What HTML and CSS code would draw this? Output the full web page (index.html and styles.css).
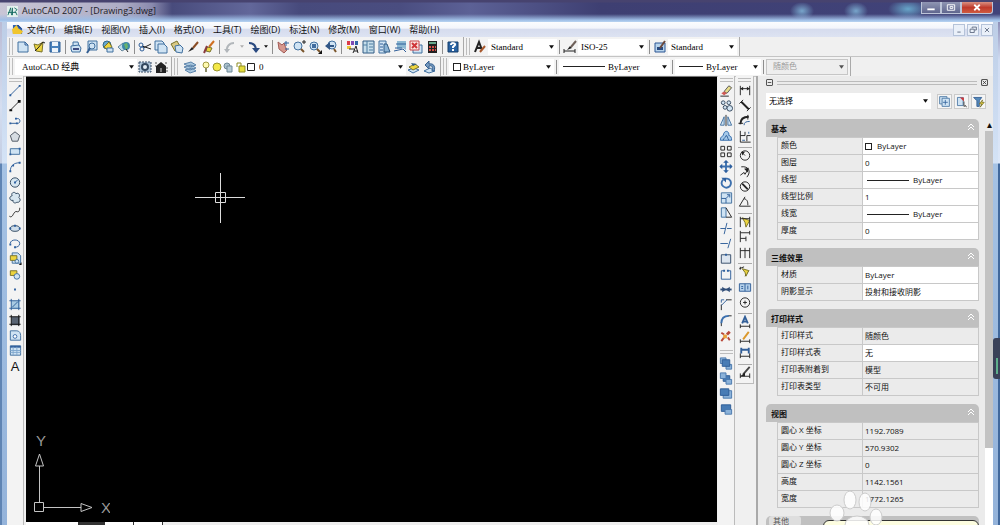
FILE: index.html
```html
<!DOCTYPE html>
<html lang="zh-CN">
<head>
    <meta charset="UTF-8">
    <meta name="viewport" content="width=device-width, initial-scale=1.0">
    <title>AutoCAD 2007 - [Drawing3.dwg]</title>
    <link rel="stylesheet" href="styles.css">
</head>
<body>
    <header class="titlebar">
        <svg class="app-icon" viewBox="0 0 12 12"><rect width="12" height="12" fill="#e4f1ee"/><path d="M1 10L4 2l1 8M6 2v8M8 2l3 2-2 2 2 4M1 7h9" stroke="#176b62"/></svg>
        <h1>AutoCAD 2007 - [Drawing3.dwg]</h1>
        <div class="window-buttons">
            <button aria-label="最小化"><svg viewBox="0 0 16 12"><path d="M4 8h8" stroke="#fff" stroke-width="2"/></svg></button>
            <button aria-label="最大化"><svg viewBox="0 0 16 12"><path d="M4 3h8v6H4zM7 5h3v2H7z" stroke="#fff"/></svg></button>
            <button class="close" aria-label="关闭"><svg viewBox="0 0 16 12"><path d="M5 3l6 6M11 3L5 9" stroke="#fff" stroke-width="2"/></svg></button>
        </div>
    </header>

    <div class="client">
        <nav class="menubar">
            <svg class="doc-icon" viewBox="0 0 12 12"><path d="M1 1h6l4 4v6H1z" fill="#2f61b5"/><path d="M0 6l5-5 2 4 5 3-2 3H1z" fill="#f0c52e"/><path d="M6 1l4 4" stroke="#17376d"/></svg>
            <a href="#">文件(F)</a>
            <a href="#">编辑(E)</a>
            <a href="#">视图(V)</a>
            <a href="#">插入(I)</a>
            <a href="#">格式(O)</a>
            <a href="#">工具(T)</a>
            <a href="#">绘图(D)</a>
            <a href="#">标注(N)</a>
            <a href="#">修改(M)</a>
            <a href="#">窗口(W)</a>
            <a href="#">帮助(H)</a>
            <div class="doc-buttons">
                <button aria-label="最小化文档"><svg viewBox="0 0 12 12"><path d="M4 8.500h4"/></svg></button>
                <button aria-label="还原文档"><svg viewBox="0 0 12 12"><path d="M5 4V2.500h5V6H8M2.500 5h5v4h-5z"/></svg></button>
                <button aria-label="关闭文档"><svg viewBox="0 0 12 12"><path d="M3.500 3.500l5 5M8.500 3.500l-5 5"/></svg></button>
            </div>
        </nav>

        <!-- standard toolbar and styles toolbar -->
        <div class="toolbar-row">
            <div class="toolbar">
                <span class="grip"></span>
                <button aria-label="新建"><svg viewBox="0 0 16 16"><path class="lb" d="M3 3h7l3 3v7H3z"/><path class="b" d="M10 3v3h3"/></svg></button>
                <button aria-label="打开"><svg viewBox="0 0 16 16"><path class="y" d="M3 5l4 1 5-3-1 10-6-1z"/><path class="k" d="M7 9l5-6 2 1M4 12l3-3"/></svg></button>
                <button aria-label="保存"><svg viewBox="0 0 16 16"><path d="M3 3h10v10H3z" fill="#4b83bd" stroke="#2f5f96"/><path d="M5 3h6v4H5zM5 9h6v4H5z" fill="#eef5fb"/></svg></button>
                <span class="sep"></span>
                <button aria-label="打印"><svg viewBox="0 0 16 16"><path class="lb" d="M5 3h5l1 4H5z"/><path class="lb" d="M3 7l8-1 2 3-1 4H4l-1-3z"/><path d="M5 10h6" stroke="#404d82" stroke-width="2"/></svg></button>
                <button aria-label="打印预览"><svg viewBox="0 0 16 16"><path class="lb" d="M4 2h9v9H4z"/><circle class="lb" cx="8" cy="7" r="3"/><path d="M6 9l-3 5" stroke="#345f92" stroke-width="2"/></svg></button>
                <button aria-label="发布"><svg viewBox="0 0 16 16"><circle cx="7" cy="6" r="4" fill="#66a8cf" stroke="#316789"/><path class="y" d="M4 8l5-5 3 5-4 3z"/><path class="lb" d="M7 9h6v4H7z"/></svg></button>
                <button aria-label="三维 DWF"><svg viewBox="0 0 16 16"><path d="M2 8l5-4 4 5-5 3z" fill="#c1dce9" stroke="#65869c"/><circle cx="10" cy="7" r="4" fill="#3d88a8"/><path d="M8 5l3-1 1 4-2 3z" fill="#69b46b"/><path class="k" d="M10 10l2 3"/></svg></button>
                <span class="sep"></span>
                <button aria-label="剪切"><svg viewBox="0 0 16 16"><path class="k" d="M14 5L6 9M14 10L5 7"/><circle class="b" cx="4" cy="6" r="2"/><circle class="b" cx="5" cy="10" r="2"/></svg></button>
                <button aria-label="复制"><svg viewBox="0 0 16 16"><path class="lb" d="M2 2h7l2 2v7H2z"/><path class="lb" d="M5 5h6l3 3v6H5z"/></svg></button>
                <button aria-label="粘贴"><svg viewBox="0 0 16 16"><path d="M2 5l6-3 4 7-6 3z" fill="#d9c984" stroke="#77712a"/><path class="lb" d="M6 7l5-1 3 3-1 5-6-1z"/></svg></button>
                <button aria-label="特性匹配"><svg viewBox="0 0 16 16"><path d="M3 13l4-5 2 2z" fill="#222"/><path d="M8 9l5-6" stroke="#8a4d25" stroke-width="2"/></svg></button>
                <button aria-label="块编辑器"><svg viewBox="0 0 16 16"><path d="M8 8l5-6" stroke="#cf7022" stroke-width="2"/><path class="y" d="M6 8l5 1-2 4-4-1z"/><path d="M3 14l3-7" stroke="#893b40" stroke-width="2"/></svg></button>
                <span class="sep"></span>
                <button aria-label="放弃"><svg viewBox="0 0 16 16"><path d="M5 13C4 8 7 4 12 4" stroke="#b2b7bb" stroke-width="2"/><path d="M2 10h6l-3 4z" fill="#b2b7bb"/></svg></button>
                <button class="drop dim" aria-label="放弃列表"></button>
                <button aria-label="重做"><svg viewBox="0 0 16 16"><path d="M3 4c6 0 7 4 7 8" stroke="#2a4a80" stroke-width="2"/><path d="M6 9h8l-4 5z" fill="#2a4a80"/></svg></button>
                <button class="drop" aria-label="重做列表"></button>
                <span class="sep"></span>
                <button aria-label="实时平移"><svg viewBox="0 0 16 16"><path d="M3 3l4 3 2-2 1 3 2 4-3 3-5-4z" fill="#d6988e" stroke="#a35d58"/><path class="b" d="M9 4h5M11 2v5M10 10h4"/></svg></button>
                <button aria-label="实时缩放"><svg viewBox="0 0 16 16"><circle class="lb" cx="7" cy="7" r="4"/><path d="M10 10l3 3" stroke="#7a552b" stroke-width="2"/><path class="k" d="M11 3h4M13 1v4"/></svg></button>
                <button aria-label="窗口缩放"><svg viewBox="0 0 16 16"><circle class="lb" cx="7" cy="7" r="4"/><path d="M10 10l3 3" stroke="#7a552b" stroke-width="2"/><path d="M5 5h4v4H5z" fill="#416c9e"/><path d="M11 15h4v-4z" fill="#111"/></svg></button>
                <button aria-label="缩放上一个"><svg viewBox="0 0 16 16"><circle class="lb" cx="9" cy="6" r="4"/><path d="M11 10l2 3" stroke="#7a552b" stroke-width="2"/><path d="M2 7l5-4v3h4v2H7v3z" fill="#315685"/></svg></button>
                <span class="sep"></span>
                <button aria-label="特性"><svg viewBox="0 0 16 16"><path d="M3 2h3v4H3z" fill="#db3b49"/><path d="M7 2h3v4H7z" fill="#7c49b3"/><path d="M11 2h3v4h-3z" fill="#2e64a6"/><path d="M3 7h4v3H3z" fill="#ebc639"/><path class="k" d="M5 10h5M9 14l3-7 2 7M10 12h4"/></svg></button>
                <button aria-label="设计中心"><svg viewBox="0 0 16 16"><path d="M3 2h11v12H3z" fill="#c6deeb" stroke="#315b83"/><path d="M7 2v12M3 6h4M9 5h4M9 8h4M9 11h4" stroke="#4e7fa2"/></svg></button>
                <button aria-label="工具选项板"><svg viewBox="0 0 16 16"><path class="lb" d="M3 2h7v12H3z"/><path d="M8 5h3l3 8H8z" fill="#8bb3d4" stroke="#315b83"/><path class="b" d="M4 5h3M4 8h3M4 11h3"/></svg></button>
                <button aria-label="图纸集管理器"><svg viewBox="0 0 16 16"><path d="M5 2h9v9l-3-2-6 1z" fill="#8db9d2"/><path class="b" d="M2 12l9-2 3 3M4 5h10M3 9h7"/></svg></button>
                <button aria-label="标记集管理器"><svg viewBox="0 0 16 16"><path class="lb" d="M5 6h9v8H5z"/><path d="M2 2h9v9H2z" fill="#f9e4e1" stroke="#c9454a"/><path d="M4 4l5 5M9 4L4 9" stroke="#d03539" stroke-width="2"/></svg></button>
                <button aria-label="快速计算器"><svg viewBox="0 0 16 16"><path d="M4 2h9v12H4z" fill="#222"/><path d="M5 3h7v2H5z" fill="#68a98b"/><path d="M5 8h7M5 11h7" stroke="#d64f45" stroke-width="2" stroke-dasharray="2 1"/></svg></button>
                <span class="sep"></span>
                <button aria-label="帮助"><svg viewBox="0 0 16 16"><path d="M3 3h10v10H3z" fill="#2a63a2" stroke="#173e6b"/><path d="M6 6c0-3 5-2 4 0l-2 2v1M8 10v2" stroke="#fff" stroke-width="2"/></svg></button>
            </div>
            <div class="toolbar">
                <span class="grip"></span>
                <button aria-label="文字样式"><svg viewBox="0 0 16 16"><path d="M3 13L7 3l3 8M5 9h5" stroke="#222" stroke-width="2"/><path d="M8 13l5-6" stroke="#a8582c" stroke-width="2"/></svg></button>
                <div class="combo w69"><select aria-label="文字样式"><option>Standard</option></select></div>
                <span class="sep"></span>
                <button aria-label="标注样式"><svg viewBox="0 0 16 16"><path d="M2 10v4M2 12h11M13 10v4" stroke="#222"/><path d="M5 11l3-4 2 2z" fill="#222"/><path d="M9 8l5-6" stroke="#6f615a" stroke-width="2"/></svg></button>
                <div class="combo w69"><select aria-label="标注样式"><option>ISO-25</option></select></div>
                <span class="sep"></span>
                <button aria-label="表格样式"><svg viewBox="0 0 16 16"><path d="M3 4h10v9H3z" fill="#b8d4ec" stroke="#2d5794"/><path d="M5 8h6v3H5z" fill="#284a80"/><path d="M8 9l5-7" stroke="#6b493c" stroke-width="2"/></svg></button>
                <div class="combo w69"><select aria-label="表格样式"><option>Standard</option></select></div>
            </div>
        </div>

        <!-- workspaces, layers and object properties -->
        <div class="toolbar-row">
            <div class="toolbar">
                <span class="grip"></span>
                <div class="combo w122 indent"><select aria-label="工作空间"><option>AutoCAD 经典</option></select></div>
                <button aria-label="工作空间设置"><svg viewBox="0 0 16 16"><path d="M2 3h12v10H2z" fill="#adc3d7" stroke="#394d66" stroke-dasharray="2 1"/><circle cx="8" cy="8" r="3" fill="#e3edf5" stroke="#33475e" stroke-width="2"/></svg></button>
                <button aria-label="我的工作空间"><svg viewBox="0 0 16 16"><path d="M3 7l5-4 5 4v7H3z" fill="#222"/><path d="M2 4h2M2 7h1M12 4h2M13 9h2M13 12h2" stroke="#555"/><path d="M7 9h2v4H7z" fill="#777"/></svg></button>
            </div>
            <div class="toolbar">
                <span class="grip"></span>
                <button class="wide" aria-label="图层特性管理器"><svg viewBox="0 0 16 16"><path d="M2 5l7-2 5 3-6 2zM2 8l7-2 5 3-6 2zM3 11l7-2 4 3-6 2z" fill="#a8c6de" stroke="#5b83aa"/></svg></button>
                <div class="combo w206">
                    <svg class="layer-state" viewBox="0 0 56 16">
                        <circle cx="6" cy="6" r="3" fill="#fffab0" stroke="#a19a43"/><path d="M5 9h2v4H5z" fill="#8c8c67"/>
                        <circle cx="17" cy="8" r="4" fill="#f4e848" stroke="#98952e"/>
                        <circle cx="27" cy="7" r="3" fill="#a9bfcb" stroke="#6e8998"/><path d="M27 7h5v6h-5z" fill="#b6cbd6" stroke="#6e8998"/>
                        <path d="M37 8V4h4v3" stroke="#8c8b22"/><path d="M39 7h6v6h-6z" fill="#e6dd3c" stroke="#8c8b22"/>
                        <path d="M47.500 4.500h7v7h-7z" fill="#fff" stroke="#222"/>
                    </svg>
                    <select aria-label="图层"><option>0</option></select>
                </div>
                <button aria-label="将对象的图层置为当前"><svg viewBox="0 0 16 16"><path class="lb" d="M2 11l6-2 5 2-6 3z"/><path class="y" d="M3 8l6-3 4 3-6 3z"/><path d="M5 4l6 1-4 2z" fill="#315b83"/></svg></button>
                <button aria-label="上一个图层"><svg viewBox="0 0 16 16"><path class="lb" d="M2 12l6-3 5 3-6 2z"/><path d="M12 12c2-5-1-8-5-7V2L3 6l4 4V7c3-1 4 1 3 5z" fill="#7398be" stroke="#355f8e"/></svg></button>
            </div>
            <div class="toolbar">
                <span class="grip"></span>
                <div class="combo w105"><span class="swatch"></span><select aria-label="颜色控制"><option>ByLayer</option></select></div>
                <span class="sep"></span>
                <div class="combo w111"><span class="line"></span><select aria-label="线型控制"><option>ByLayer</option></select></div>
                <span class="sep"></span>
                <div class="combo w86"><span class="line short"></span><select aria-label="线宽控制"><option>ByLayer</option></select></div>
                <span class="sep"></span>
                <div class="combo w82 off"><select aria-label="打印样式控制" disabled><option>随颜色</option></select></div>
            </div>
        </div>

        <main class="workspace">
            <aside class="tools">
                <span class="grip-h"></span>
                <div class="tool-list">
                    <button aria-label="直线"><svg viewBox="0 0 16 16"><path class="b" d="M3 13L13 3"/><path class="dot" d="M2 12h2v2H2zM12 2h2v2h-2z"/></svg></button>
                    <button aria-label="构造线"><svg viewBox="0 0 16 16"><path class="k" d="M3 13L13 3"/><path d="M2 12h3v2H2zM11 2h3v3h-3z" fill="#111"/></svg></button>
                    <button aria-label="多段线"><svg viewBox="0 0 16 16"><path class="b" d="M3 11h8c3 0 3-5 0-5H8"/><path class="dot" d="M2 10h2v2H2zM9 10h2v2H9zM8 5h2v2H8z"/></svg></button>
                    <button aria-label="正多边形"><svg viewBox="0 0 16 16"><path d="M8 3l5 4-2 6H5L3 7z" fill="#d6dce2" stroke="#4c5460"/></svg></button>
                    <button aria-label="矩形"><svg viewBox="0 0 16 16"><path class="lb" d="M3 5h10v6H3z"/><path class="dot" d="M2 10h2v2H2zM12 4h2v2h-2z"/></svg></button>
                    <button aria-label="圆弧"><svg viewBox="0 0 16 16"><path class="b" d="M3 13c0-6 4-9 10-9"/><path class="dot" d="M2 12h2v2H2zM5 6h2v2H5zM12 3h2v2h-2z"/></svg></button>
                    <button aria-label="圆"><svg viewBox="0 0 16 16"><circle cx="8" cy="8" r="5" fill="#d7e6f0" stroke="#30485f"/><path class="b" d="M8 8l3-3"/><path class="dot" d="M7 7h2v2H7z"/></svg></button>
                    <button aria-label="修订云线"><svg viewBox="0 0 16 16"><path d="M5 6c-2-3 3-5 4-2 3-2 5 2 3 4 3 2 1 6-2 5-2 2-5 0-4-2-4 1-5-4-1-5z" fill="#d7e6f0" stroke="#30485f"/></svg></button>
                    <button aria-label="样条曲线"><svg viewBox="0 0 16 16"><path class="k" d="M2 12c4 3 4-6 8-5 2 1 3-1 3-4"/></svg></button>
                    <button aria-label="椭圆"><svg viewBox="0 0 16 16"><ellipse cx="8" cy="8" rx="5" ry="3" fill="#cfdeeb" stroke="#30485f"/><path class="dot" d="M7 4h2v2H7zM2 7h2v2H2zM12 7h2v2h-2z"/></svg></button>
                    <button aria-label="椭圆弧"><svg viewBox="0 0 16 16"><path class="b" d="M3 8c0-5 10-5 10 0 0 3-3 4-5 4"/><path class="dot" d="M2 8h2v2H2zM7 11h2v2H7z"/></svg></button>
                    <button aria-label="插入块"><svg viewBox="0 0 16 16"><path class="lb" d="M5 2h6l3 3v8H5z"/><path class="y" d="M3 5h7v5H3z"/><circle class="lb" cx="10" cy="11" r="2"/><path d="M12 15h3v-3z" fill="#111"/></svg></button>
                    <button aria-label="创建块"><svg viewBox="0 0 16 16"><path class="y" d="M3 4h7v5H3z"/><circle class="lb" cx="10" cy="10" r="3"/></svg></button>
                    <button aria-label="点"><svg viewBox="0 0 16 16"><path class="dot" d="M7 7h2v2H7z"/></svg></button>
                    <button aria-label="图案填充"><svg viewBox="0 0 16 16"><path d="M4 4h9v9H4z" fill="#a9cbe3"/><path class="b" d="M4 2v12M12 2v12M2 4h12M2 12h12M5 11l6-6"/></svg></button>
                    <button aria-label="渐变色"><svg viewBox="0 0 16 16"><path d="M4 4h9v9H4z" fill="#596473"/><path d="M4 2v12M12 2v12M2 4h12M2 12h12" stroke="#111"/></svg></button>
                    <button aria-label="面域"><svg viewBox="0 0 16 16"><path class="lb" d="M3 3h7c3 0 4 3 4 5v5H3z"/><circle cx="8" cy="9" r="2" fill="#fff" stroke="#3d6da7"/></svg></button>
                    <button aria-label="表格"><svg viewBox="0 0 16 16"><path class="lb" d="M3 3h11v10H3z"/><path d="M3 4h11" stroke="#315f9d" stroke-width="2"/><path d="M3 8h11M3 10h11M6 4v9M10 4v9" stroke="#7fa6ce"/></svg></button>
                    <button class="text-tool" aria-label="多行文字">A</button>
                </div>
            </aside>

            <section class="drawing">
                <div class="canvas">
                    <svg class="cursor" viewBox="0 0 50 50"><path d="M0 24.500h50M25.500 0v50M20.500 19.500h10v10h-10z"/></svg>
                    <svg class="ucs" viewBox="0 0 80 84">
                        <path d="M4.500 70.500h9v9h-9zM9.500 70V34M14 75.500h37M9.500 22l4 12h-8zM62 75.500l-11-4v8z"/>
                        <text x="6" y="14">Y</text>
                        <text x="71" y="81">X</text>
                    </svg>
                </div>
                <div class="layout-tabs"><span class="tab-arrows"></span><span class="tab-on"></span><span class="tab"></span><span class="tab"></span></div>
            </section>

            <aside class="tools">
                <span class="grip-h"></span>
                <div class="tool-list">
                    <button aria-label="删除"><svg viewBox="0 0 16 16"><path d="M6 9l5-6 3 2-5 6z" fill="#e8dd8a" stroke="#555"/><path d="M3 11l3-2 3 2-3 2z" fill="#cf5a54"/><path class="k" d="M2 14h9"/></svg></button>
                    <button aria-label="复制对象"><svg viewBox="0 0 16 16"><g fill="#d3e5f3" stroke="#33465c"><circle cx="5" cy="5" r="2"/><circle cx="11" cy="5" r="2"/><circle cx="7" cy="10" r="2"/><circle cx="12" cy="11" r="3"/></g></svg></button>
                    <button aria-label="镜像"><svg viewBox="0 0 16 16"><path class="lb" d="M6 4v9H2zM10 4v9h4z"/><path class="k" d="M8 2v12"/></svg></button>
                    <button aria-label="偏移"><svg viewBox="0 0 16 16"><path d="M2 12c0-4 2-4 3-5 1-7 7-5 6 0 2 0 3 2 3 5z" fill="#a5c9e9" stroke="#336bab"/><path class="b" d="M5 12c0-3 3-2 3-5 2 0 1 2 3 5"/></svg></button>
                    <button aria-label="阵列"><svg viewBox="0 0 16 16"><path class="k" d="M2.500 2.500h4v4h-4zM9.500 2.500h4v4h-4zM2.500 9.500h4v4h-4zM9.500 9.500h4v4h-4z"/></svg></button>
                    <button aria-label="移动"><svg viewBox="0 0 16 16"><path d="M8 2v12M2 8h12" stroke="#3c70ae" stroke-width="2"/><path class="dot" d="M5 4l3-3 3 3zM5 12l3 3 3-3zM4 5L1 8l3 3zM12 5l3 3-3 3z"/></svg></button>
                    <button aria-label="旋转"><svg viewBox="0 0 16 16"><path d="M5 5c-5 5 2 11 7 7 3-4 0-9-4-8" stroke="#3c70ae" stroke-width="2"/><path class="dot" d="M3 3h5v5z"/></svg></button>
                    <button aria-label="缩放"><svg viewBox="0 0 16 16"><path class="lb" d="M3 3h11v11H3z"/><path class="b" d="M3 9h5v5M8 9l4-4M9 5h3v3"/></svg></button>
                    <button aria-label="拉伸"><svg viewBox="0 0 16 16"><path class="lb" d="M3 3h5v10H3z"/><path class="k" d="M8 3l6 10H8"/></svg></button>
                    <button aria-label="修剪"><svg viewBox="0 0 16 16"><path class="b" d="M2 8h5M9 8h5M9 2L6 14"/></svg></button>
                    <button aria-label="延伸"><svg viewBox="0 0 16 16"><path class="b" d="M2 8h8M13 3l-3 10"/></svg></button>
                    <button aria-label="打断于点"><svg viewBox="0 0 16 16"><path d="M3 4h10v9H3z" fill="#dce5ef" stroke="#354c69"/><path class="dot" d="M7 3h2v2H7z"/></svg></button>
                    <button aria-label="打断"><svg viewBox="0 0 16 16"><path class="b" d="M6 4H3v9h10V4h-3"/><path class="dot" d="M5 3h2v2H5zM9 3h2v2H9z"/></svg></button>
                    <button aria-label="合并"><svg viewBox="0 0 16 16"><path d="M2 8h12" stroke="#304e78" stroke-width="2"/><path d="M4 5l4 3-4 3zM12 5L8 8l4 3z" fill="#304e78"/></svg></button>
                    <button aria-label="倒角"><svg viewBox="0 0 16 16"><path class="k" d="M3 14V8M8 3h6"/><path class="b" d="M3 9l6-6M3 3h3M3 3v3"/></svg></button>
                    <button aria-label="圆角"><svg viewBox="0 0 16 16"><path class="k" d="M3 14v-4M10 3h4"/><path d="M3 11c0-5 3-8 8-8" stroke="#3c70ae" stroke-width="2"/></svg></button>
                    <button aria-label="分解"><svg viewBox="0 0 16 16"><path d="M9 7l3-3" stroke="#b84738" stroke-width="3"/><path d="M6 10l-3 4M6 7L3 5M10 10l2 3" stroke="#b84738" stroke-width="2"/><path d="M5 7h4v4H5z" fill="#e9a23c"/></svg></button>
                </div>
                <span class="grip-h second"></span>
                <div class="tool-list">
                    <button aria-label="前置"><svg viewBox="0 0 16 16"><path class="mb" d="M2 2h6v6H2zM8 9h6v5H8z"/><path class="db" d="M4 4h8v7H4z"/></svg></button>
                    <button aria-label="后置"><svg viewBox="0 0 16 16"><path class="db" d="M5 5h7v6H5z"/><path class="mb" d="M2 2h6v6H2zM8 9h6v5H8z"/></svg></button>
                    <button aria-label="置于对象之上"><svg viewBox="0 0 16 16"><path class="mb" d="M5 5h9v8H5z"/><path class="db" d="M2 3h9v7H2z"/></svg></button>
                    <button aria-label="置于对象之下"><svg viewBox="0 0 16 16"><path class="db" d="M3 3h10v7H3z"/><path class="mb" d="M7 8h7v5H7z"/></svg></button>
                </div>
            </aside>

            <aside class="tools dims">
                <span class="grip-h"></span>
                <div class="tool-list">
                    <button aria-label="线性标注"><svg viewBox="0 0 16 16"><path class="k" d="M3 3v10M13 3v10M3 6h10"/><path d="M3 6l3-2v4zM13 6l-3-2v4z" fill="#222"/></svg></button>
                    <button aria-label="对齐标注"><svg viewBox="0 0 16 16"><path class="k" d="M2 6l4-4M10 14l4-4"/><path d="M4 4l8 8" stroke="#222" stroke-width="2"/></svg></button>
                    <button aria-label="弧长标注"><svg viewBox="0 0 16 16"><path d="M3 12c0-5 3-8 9-8" stroke="#222" stroke-width="2"/><path class="k" d="M1 11h5M11 2v5"/><path class="b" d="M7 13c0-3 2-4 6-4"/></svg></button>
                    <button aria-label="坐标标注"><svg viewBox="0 0 16 16"><path class="k" d="M3 2v12h11M3 7h5V3M10 13V7h4"/><path class="b" d="M5 12h3M12 3v2"/></svg></button>
                    <span class="sep-h"></span>
                    <button aria-label="半径标注"><svg viewBox="0 0 16 16"><circle class="k" cx="8" cy="8" r="5"/><path class="k" d="M8 8L5 5"/><path d="M4 4h4L5 8z" fill="#222"/></svg></button>
                    <button aria-label="折弯标注"><svg viewBox="0 0 16 16"><path class="k" d="M4 3c8-1 11 5 6 11M3 12l4-3 1 2 3-5"/><path d="M7 5l5-1-1 5z" fill="#222"/></svg></button>
                    <button aria-label="直径标注"><svg viewBox="0 0 16 16"><circle class="k" cx="8" cy="8" r="5"/><path d="M5 5l6 6" stroke="#222" stroke-width="2"/></svg></button>
                    <button aria-label="角度标注"><svg viewBox="0 0 16 16"><path class="k" d="M14 13H2l6-10M7 5c4 1 4 4 4 7"/></svg></button>
                    <span class="sep-h"></span>
                    <button aria-label="快速标注"><svg viewBox="0 0 16 16"><path class="y" d="M5 4l8 3-4 7-1-5z"/><path d="M3 3v11M13 3v11M3 5h10" stroke="#222"/></svg></button>
                    <button aria-label="基线标注"><svg viewBox="0 0 16 16"><path class="k" d="M3 2v12M13 2v4M9 8v5M3 4h10M3 10h6"/></svg></button>
                    <button aria-label="连续标注"><svg viewBox="0 0 16 16"><path class="k" d="M3 3v11M8 3v11M13 3v11M3 6h10"/></svg></button>
                    <span class="sep-h"></span>
                    <button aria-label="快速引线"><svg viewBox="0 0 16 16"><path class="k" d="M2 5l5-2M3 3v3M8 13l4-6"/><path class="y" d="M5 5l7 2-3 6-1-4z"/></svg></button>
                    <button aria-label="公差"><svg viewBox="0 0 16 16"><path d="M2 4h12v8H2z" fill="#b5d1eb" stroke="#315e98"/><path class="b" d="M8 4v8M4 7h2M4 9h2M11 6v4"/></svg></button>
                    <button aria-label="圆心标记"><svg viewBox="0 0 16 16"><circle class="k" cx="8" cy="8" r="5"/><path class="k" d="M8 6v4M6 8h4"/></svg></button>
                    <span class="sep-h"></span>
                    <button aria-label="编辑标注"><svg viewBox="0 0 16 16"><path d="M5 9l3-7 3 7M6 7h4" stroke="#315e98" stroke-width="2"/><path class="k" d="M3 10v4M13 10v4M3 12h10"/></svg></button>
                    <button aria-label="编辑标注文字"><svg viewBox="0 0 16 16"><path d="M6 10l6-8" stroke="#db982b" stroke-width="2"/><path class="k" d="M3 10v4M13 10v4M3 12h10"/></svg></button>
                    <button aria-label="标注更新"><svg viewBox="0 0 16 16"><path d="M4 3v6M12 3v6M4 5h8" stroke="#315e98" stroke-width="2"/><path class="k" d="M3 9v5M13 9v5M3 12h10"/></svg></button>
                    <span class="sep-h"></span>
                    <button aria-label="标注样式管理"><svg viewBox="0 0 16 16"><path d="M6 10l7-8" stroke="#444" stroke-width="2"/><path class="k" d="M3 9v5M13 9v5M3 12h10"/><path d="M3 12l5-4v4z" fill="#222"/></svg></button>
                </div>
            </aside>

            <aside class="properties">
                <div class="palette-bar">
                    <button aria-label="折叠"><svg viewBox="0 0 7 7"><path d="M1 3.500h5"/></svg></button>
                    <span class="palette-grip"></span>
                    <button aria-label="关闭特性"><svg viewBox="0 0 7 7"><path d="M1 1l5 5M6 1L1 6"/></svg></button>
                </div>
                <div class="selection">
                    <div class="combo"><select aria-label="选择对象"><option>无选择</option></select></div>
                    <button aria-label="切换 PICKADD"><svg viewBox="0 0 16 16"><path class="lb" d="M2 2h9v9H2z"/><path class="lb" d="M5 4h9v10H5z"/><path class="b" d="M9 6v6M6 9h6"/></svg></button>
                    <button aria-label="选择对象"><svg viewBox="0 0 16 16"><path class="lb" d="M3 3h7v10H3z"/><path d="M6 3h5v5z" fill="#ca3a3d"/><path class="k" d="M11 8v6l2-1 1 2"/></svg></button>
                    <button aria-label="快速选择"><svg viewBox="0 0 16 16"><path d="M2 3h10L9 7v7H6V7z" fill="#568aba" stroke="#2c578e"/><path class="y" d="M13 6l-4 5h3l-2 4 5-6h-3z"/></svg></button>
                </div>
                <div class="palette-body">
                    <div class="groups">
                        <section class="group">
                            <h2>基本 <svg viewBox="0 0 8 8"><path d="M1 4l3-3 3 3M1 7l3-3 3 3"/></svg></h2>
                            <table>
                                <tr><th>颜色</th><td><span class="swatch"></span>ByLayer</td></tr>
                                <tr><th>图层</th><td>0</td></tr>
                                <tr><th>线型</th><td><span class="line"></span>ByLayer</td></tr>
                                <tr><th>线型比例</th><td>1</td></tr>
                                <tr><th>线宽</th><td><span class="line"></span>ByLayer</td></tr>
                                <tr><th>厚度</th><td>0</td></tr>
                            </table>
                        </section>
                        <section class="group">
                            <h2>三维效果 <svg viewBox="0 0 8 8"><path d="M1 4l3-3 3 3M1 7l3-3 3 3"/></svg></h2>
                            <table>
                                <tr><th>材质</th><td>ByLayer</td></tr>
                                <tr><th>阴影显示</th><td>投射和接收阴影</td></tr>
                            </table>
                        </section>
                        <section class="group">
                            <h2>打印样式 <svg viewBox="0 0 8 8"><path d="M1 4l3-3 3 3M1 7l3-3 3 3"/></svg></h2>
                            <table>
                                <tr><th>打印样式</th><td class="fixed">随颜色</td></tr>
                                <tr><th>打印样式表</th><td>无</td></tr>
                                <tr><th>打印表附着到</th><td class="fixed">模型</td></tr>
                                <tr><th>打印表类型</th><td class="fixed">不可用</td></tr>
                            </table>
                        </section>
                        <section class="group">
                            <h2>视图 <svg viewBox="0 0 8 8"><path d="M1 4l3-3 3 3M1 7l3-3 3 3"/></svg></h2>
                            <table>
                                <tr><th>圆心 X 坐标</th><td class="fixed">1192.7089</td></tr>
                                <tr><th>圆心 Y 坐标</th><td class="fixed">570.9302</td></tr>
                                <tr><th>圆心 Z 坐标</th><td class="fixed">0</td></tr>
                                <tr><th>高度</th><td class="fixed">1142.1561</td></tr>
                                <tr><th>宽度</th><td class="fixed">1772.1265</td></tr>
                            </table>
                        </section>
                        <section class="group">
                            <h2 class="next"><span class="chip">其他</span></h2>
                        </section>
                    </div>
                    <div class="scrollbar"><span class="up">▴</span><span class="thumb"></span></div>
                </div>
                <div class="balloon"></div>
                <svg class="paw" viewBox="0 0 56 36"><ellipse cx="21" cy="11" rx="6" ry="9"/><ellipse cx="36" cy="13" rx="6" ry="9"/><ellipse cx="8" cy="24" rx="7" ry="8"/><ellipse cx="47" cy="28" rx="6" ry="8"/><ellipse cx="28" cy="36" rx="12" ry="9"/></svg>
            </aside>
        </main>
    </div>
    <div class="side-gadget"></div>
</body>
</html>
```
FILE: styles.css
```css
* {
    box-sizing: border-box;
}
body {
    margin: 0;
    height: 100vh;
    overflow: hidden;
    display: flex;
    flex-direction: column;
    position: relative;
    padding: 0 7px;
    font-family: "Open Sans", "Noto Sans CJK SC", sans-serif;
    font-size: 9px;
    color: #111;
    background:
        linear-gradient(#b3b2cd 0, #d5def0 107px, #c3cde2 163px, #5f84b3 164px) left / 2px 100% no-repeat,
        linear-gradient(#6a6597 0, #d0dcf2 60px, #dce7f8 163px, #41689c 164px) right / 2px 100% no-repeat,
        linear-gradient(#b9cae4 0, #d4e3f6 163px, #a5c2e4 164px, #94b3da);
}
button {
    border: 0;
    padding: 0;
    margin: 0;
    background: none;
    font: inherit;
    color: inherit;
    flex: none;
}
svg {
    display: block;
    fill: none;
}
a {
    color: inherit;
    text-decoration: none;
}

/* icon strokes */
.b { stroke: #2e5e99; }
.k { stroke: #222; }
.lb { fill: #cfe3f3; stroke: #41709f; }
.mb { fill: #8bb2d9; stroke: #4a79ae; }
.db { fill: #487cb5; stroke: #2d5c95; }
.y { fill: #ecd43f; stroke: #77712a; }
.dot { fill: #2d5f9f; }

/* title bar */
.titlebar {
    flex: none;
    height: 22px;
    margin: 0 -7px;
    padding: 0 7px;
    display: flex;
    align-items: center;
    background:
        linear-gradient(#47436f 2px, #c7d0e600 3px),
        linear-gradient(transparent 14px, #9fbee6 20px, #b9d3f1),
        radial-gradient(ellipse 12px 9px at 802px 11px, #78a5cb, transparent),
        radial-gradient(ellipse 12px 9px at 856px 11px, #78a5cb, transparent),
        radial-gradient(ellipse 20px 10px at 908px 9px, #67a5c9, transparent),
        linear-gradient(90deg, #c9c6d6 0, #aeadc5 120px, #8a8aae 152px, #484b7c 172px, #62679a 250px, #474a7c 300px, #4a4d80 400px, #5c6196 470px, #3e3f72 600px, #41437a 100%);
}
.app-icon {
    width: 11px;
    height: 11px;
}
.titlebar h1 {
    margin: 0 auto 0 4px;
    font-size: 9px;
    font-weight: 400;
    line-height: 20px;
    color: #1c1c28;
}
.window-buttons {
    display: flex;
    align-self: flex-start;
    height: 14px;
    padding-top: 2px;
}
.window-buttons button {
    width: 20px;
    border: 1px solid #bcc4d8;
    border-top: 0;
    background: linear-gradient(#9096b3, #5f668e);
}
.window-buttons button svg {
    width: 100%;
    height: 11px;
}
.window-buttons .close {
    width: 32px;
    border-radius: 0 0 3px 0;
    background: linear-gradient(#d99081, #bf3a2c 50%, #cf5a3f);
}

.client {
    flex: 1;
    min-height: 0;
    display: flex;
    flex-direction: column;
    background: #f0f0f0;
}

/* menu */
.menubar {
    flex: none;
    height: 15px;
    display: flex;
    align-items: center;
    gap: 9px;
    padding-left: 5px;
    white-space: nowrap;
    background: linear-gradient(#fbfcfe 0, #f3f5fb 40%, #d6dcee 50%, #dde3f2);
}
.doc-icon {
    width: 11px;
    height: 11px;
    margin-right: -5px;
}
.doc-buttons {
    display: flex;
    gap: 2px;
    margin-left: auto;
}
.doc-buttons button {
    width: 12px;
    height: 12px;
    border: 1px solid #b5c3d9;
    background: #eaf0f9;
}
.doc-buttons svg {
    width: 10px;
    height: 10px;
    stroke: #55617a;
}

/* toolbars */
.toolbar-row {
    flex: none;
    display: flex;
    height: 20px;
    border-bottom: 1px solid #c4c4c4;
}
.toolbar-row .toolbar {
    display: flex;
    align-items: center;
    padding-right: 2px;
    border-right: 1px solid #aaa;
    background: #f3f3f3;
}
.grip {
    width: 4px;
    height: 17px;
    margin: 0 2px;
    border: 1px solid #bdbdbd;
    border-width: 0 1px;
}
.sep {
    width: 1px;
    height: 14px;
    margin: 0 2px;
    background: #8e8e8e;
}
.toolbar button {
    width: 16px;
    height: 16px;
}
.toolbar button svg {
    width: 16px;
    height: 16px;
}
.toolbar .wide {
    width: 20px;
}
.toolbar .wide svg {
    margin: 0 auto;
}
.toolbar .drop {
    width: 8px;
    height: 8px;
    background: url("data:image/svg+xml,%3Csvg xmlns='http://www.w3.org/2000/svg' viewBox='0 0 6 4'%3E%3Cpath d='M0 0h6L3 4z' fill='%23111'/%3E%3C/svg%3E") center / 4px 3px no-repeat;
}
.toolbar .dim {
    opacity: 0.3;
}
.combo {
    display: flex;
    align-items: center;
    height: 16px;
    background: #fff;
}
.combo select {
    flex: 1;
    min-width: 0;
    height: 16px;
    border: 0;
    padding: 0 10px 0 3px;
    appearance: none;
    font-family: "Liberation Serif", "Noto Sans CJK SC", serif;
    font-size: 9px;
    line-height: 16px;
    color: #000;
    background: url("data:image/svg+xml,%3Csvg xmlns='http://www.w3.org/2000/svg' viewBox='0 0 6 4'%3E%3Cpath d='M0 0h6L3 4z' fill='%23111'/%3E%3C/svg%3E") right 3px center / 5px 4px no-repeat;
}
.w69 { width: 69px; }
.w82 { width: 82px; }
.w86 { width: 86px; }
.w105 { width: 105px; }
.w111 { width: 111px; }
.w122 { width: 122px; }
.w206 { width: 206px; }
.combo.indent select {
    padding-left: 7px;
}
.combo.off {
    border: 1px solid #c6c6c6;
    background: #eee;
}
.combo.off select {
    padding-left: 6px;
    font-size: 8px;
    color: #777;
    opacity: 0.7;
}
.layer-state {
    flex: none;
    width: 56px;
    height: 16px;
}
.swatch {
    flex: none;
    display: inline-block;
    width: 8px;
    height: 8px;
    border: 1px solid #222;
    background: #fff;
}
.combo .swatch {
    margin-left: 4px;
}
.combo .swatch + select {
    padding-left: 2px;
}
.line {
    flex: none;
    display: inline-block;
    width: 42px;
    height: 1px;
    background: #222;
}
.combo .line {
    margin-left: 4px;
}
.combo .short {
    width: 24px;
}

/* workspace */
.workspace {
    flex: 1;
    min-height: 0;
    display: flex;
    margin-top: -1px;
}
.tools {
    flex: none;
    width: 17px;
    display: flex;
    flex-direction: column;
    align-items: center;
    border-right: 1px solid #bbb;
    background: #f3f3f3;
}
.tools + .tools {
    margin-left: 1px;
}
.grip-h {
    flex: none;
    width: 13px;
    height: 4px;
    margin: 2px 0 1px;
    border: 1px solid #bdbdbd;
    border-width: 1px 0;
}
.second {
    margin: 7px 0 2px;
}
.tool-list {
    display: flex;
    flex-direction: column;
    align-items: center;
}
.tool-list > * {
    flex: none;
}
.tool-list > :nth-child(3n) {
    margin-bottom: 1px;
}
.tool-list button {
    width: 16px;
    height: 15px;
}
.tool-list svg {
    width: 16px;
    height: 15px;
}
.tool-list .text-tool {
    font-family: "Liberation Sans", sans-serif;
    font-size: 13px;
    line-height: 15px;
}
.sep-h {
    width: 14px;
    height: 4px;
    border-bottom: 1px solid #aaa;
}
.dims {
    align-self: flex-start;
    width: 18px;
    padding-bottom: 3px;
    border-bottom: 1px solid #bbb;
}
.drawing {
    flex: 1;
    min-width: 0;
    display: flex;
    flex-direction: column;
    margin: 0 1px 0 2px;
}
.canvas {
    flex: 1;
    position: relative;
    background: #000;
    border-top: 1px solid #777;
}
.cursor {
    position: absolute;
    left: 169px;
    top: 96px;
    width: 50px;
    height: 50px;
    stroke: #ddd;
}
.ucs {
    position: absolute;
    left: 4px;
    bottom: 6px;
    width: 80px;
    height: 84px;
    stroke: #c4c4c4;
}
.ucs text {
    font-family: "Liberation Sans", sans-serif;
    font-size: 15px;
    stroke: none;
    fill: #999;
}
.layout-tabs {
    display: flex;
    height: 3px;
    background: #eee;
}
.layout-tabs span {
    width: 29px;
    border-right: 1px solid #333;
    background: #fff;
}
.layout-tabs .tab-arrows {
    width: 53px;
}
.layout-tabs .tab-on {
    width: 26px;
    background: #333;
}

/* properties palette */
.properties {
    flex: none;
    width: 237px;
    margin-left: 2px;
    position: relative;
    display: flex;
    flex-direction: column;
    padding: 3px 0 0 8px;
    border-left: 2px solid #a9a9a9;
    background: #ebebeb;
    overflow: hidden;
    font-size: 8px;
}
.palette-bar {
    display: flex;
    align-items: center;
    gap: 4px;
    padding-right: 5px;
}
.palette-bar button {
    width: 7px;
    height: 7px;
    border: 1px solid #555;
    border-radius: 1px;
}
.palette-bar svg {
    width: 5px;
    height: 5px;
    stroke: #222;
}
.palette-grip {
    flex: 1;
    height: 4px;
    border: 1px solid #bbb;
    border-width: 1px 0;
}
.selection {
    display: flex;
    align-items: center;
    padding: 7px 7px 0 0;
}
.selection .combo {
    flex: 1;
    margin-right: 4px;
}
.selection .combo select {
    font-family: "Open Sans", "Noto Sans CJK SC", sans-serif;
    font-size: 8px;
}
.selection button {
    width: 15px;
    height: 15px;
    margin-left: 2px;
    border: 1px solid #cacaca;
    background: #f5f5f5;
}
.selection button svg {
    width: 13px;
    height: 13px;
}
.palette-body {
    flex: 1;
    min-height: 0;
    display: flex;
    padding-top: 10px;
}
.groups {
    flex: 1;
    min-width: 0;
}
.group {
    margin-bottom: 8px;
}
.group h2 {
    display: flex;
    align-items: center;
    justify-content: space-between;
    height: 18px;
    margin: 0;
    padding: 0 4px 0 5px;
    border-radius: 5px 5px 0 0;
    font-size: 8px;
    font-weight: 700;
    background: #c0c0c0;
}
.group h2 svg {
    width: 8px;
    height: 8px;
    margin-bottom: 3px;
    stroke: #fff;
}
.group h2.next {
    align-items: flex-start;
    padding-left: 3px;
}
.group h2 .chip {
    padding: 0 12px 0 4px;
    border-radius: 3px;
    font-weight: 400;
    line-height: 10px;
    background: #dedede;
    color: #555;
}
.group table {
    width: calc(100% - 11px);
    margin-left: 11px;
    border-collapse: collapse;
    table-layout: fixed;
}
.group th,
.group td {
    height: 17px;
    padding: 0 2px;
    border: 1px solid #c8c8c8;
    font-weight: 400;
    line-height: 12px;
    text-align: left;
    white-space: nowrap;
}
.group th {
    width: 85px;
    padding: 0 2px 2px 3px;
}
.group td {
    background: #fff;
}
.group td.fixed {
    background: #ebebeb;
}
.group .swatch {
    width: 7px;
    height: 7px;
    margin-right: 5px;
    vertical-align: middle;
}
.group .line {
    margin: 0 4px 0 2px;
    vertical-align: middle;
}
.scrollbar {
    flex: none;
    width: 8px;
    margin-left: 6px;
    display: flex;
    flex-direction: column;
    background: #fff;
}
.scrollbar .up {
    height: 12px;
    font-size: 10px;
    line-height: 10px;
    text-align: center;
    background: #ebebeb;
}
.scrollbar .thumb {
    height: 78%;
    background: #c2c2c2;
}
.paw {
    position: absolute;
    right: 108px;
    bottom: 0;
    width: 56px;
    height: 36px;
    fill: #fff;
    fill-opacity: 0.85;
    stroke: #ccc;
}
.balloon {
    position: absolute;
    right: 14px;
    bottom: -12px;
    width: 156px;
    height: 17px;
    border: 1px solid #333;
    border-radius: 6px;
    background: #fdfde0;
}
.side-gadget {
    position: absolute;
    right: 0;
    top: 338px;
    width: 7px;
    height: 41px;
    border-radius: 3px 0 0 3px;
    background: linear-gradient(90deg, transparent 3px, #5fae8b 3px, #5fae8b 5px, transparent 5px) 0 20px / 7px 16px no-repeat, #3a4158;
}
```
